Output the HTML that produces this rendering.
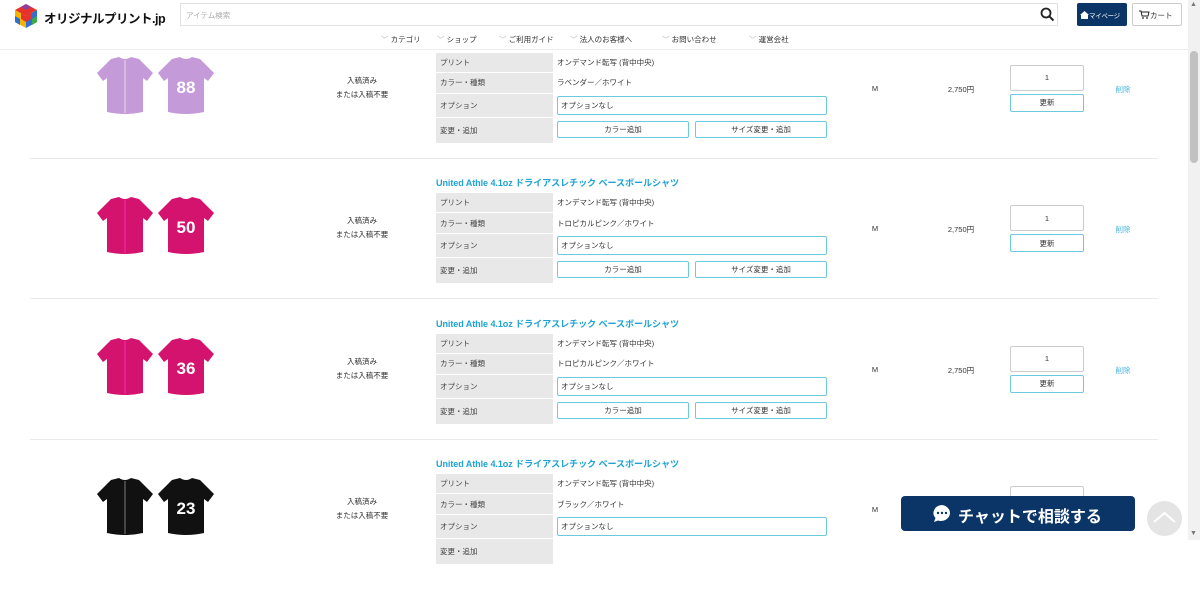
<!DOCTYPE html>
<html><head><meta charset="utf-8"><style>
*{margin:0;padding:0;box-sizing:border-box}
body{width:1200px;height:540px;overflow:hidden;background:#fff;font-family:"Liberation Sans","Noto Sans CJK JP",sans-serif;color:#333;font-size:8px;position:relative}
.a{position:absolute}
.row{position:absolute;left:0;width:1188px;height:140px}
.title{position:absolute;left:436px;top:1px;font-size:9.1px;font-weight:bold;color:#1fa3d4;white-space:nowrap;letter-spacing:-0.1px}
.lab{position:absolute;left:436px;width:117px;background:#e8e8e8;padding-left:4px;display:flex;align-items:center;font-size:7.5px;color:#444}
.val{position:absolute;left:557px;display:flex;align-items:center;font-size:7.5px;color:#333;white-space:nowrap}
.box{position:absolute;border:1px solid #6cc9e0;border-radius:2px;background:#fff;font-size:7.5px;display:flex;align-items:center}
.c{justify-content:center}
.sep{position:absolute;left:30px;width:1128px;height:1px;background:#eaeaea;top:124px}
.mid{position:absolute;font-size:7.5px;text-align:center;white-space:nowrap}
</style></head><body>
<svg width="0" height="0" style="position:absolute"><defs>
<path id="sh" d="M14,3 L22,1 Q28,5 34,1 L42,3 L56,17 L50,25 L46,22 L46,56 Q28,60 10,56 L10,22 L6,25 L0,17 Z"/>
</defs></svg>

<div class="row" style="top:33.5px">
<div class="title">United Athle 4.1oz ドライアスレチック ベースボールシャツ</div>
<svg class="a" style="left:97px;top:22px" width="56" height="61"><use href="#sh" fill="#c49ad8"/><line x1="28" y1="4" x2="28" y2="57" stroke="#eee" stroke-width="0.8"/></svg>
<svg class="a" style="left:158px;top:22px" width="56" height="61"><use href="#sh" fill="#c49ad8"/><text x="28" y="37" font-size="17" font-weight="bold" fill="#fff" text-anchor="middle" font-family="Liberation Sans">88</text></svg>
<div class="mid" style="left:320px;width:84px;top:40px;line-height:14px">入稿済み<br>または入稿不要</div>
<div class="lab" style="top:19px;height:19px">プリント</div><div class="val" style="top:19px;height:19px">オンデマンド転写 (背中中央)</div>
<div class="lab" style="top:39px;height:20px">カラー・種類</div><div class="val" style="top:39px;height:20px">ラベンダー／ホワイト</div>
<div class="lab" style="top:60px;height:23px">オプション</div><div class="box" style="left:557px;top:62px;width:270px;height:19px;padding-left:3px">オプションなし</div>
<div class="lab" style="top:84px;height:25px">変更・追加</div><div class="box c" style="left:557px;top:87px;width:132px;height:17px">カラー追加</div><div class="box c" style="left:695px;top:87px;width:132px;height:17px">サイズ変更・追加</div>
<div class="mid" style="left:865px;width:20px;top:50px">M</div>
<div class="mid" style="left:935px;width:52px;top:50px">2,750円</div>
<div class="box c" style="left:1010px;top:31px;width:74px;height:26px;border-color:#ccc">1</div>
<div class="box c" style="left:1010px;top:60px;width:74px;height:18px">更新</div>
<div class="mid" style="left:1113px;width:20px;top:50px;color:#4ab6dc">削除</div>
<div class="sep"></div>
</div>

<div class="row" style="top:174px">
<div class="title">United Athle 4.1oz ドライアスレチック ベースボールシャツ</div>
<svg class="a" style="left:97px;top:22px" width="56" height="61"><use href="#sh" fill="#d4136f"/><line x1="28" y1="4" x2="28" y2="57" stroke="#f3b" stroke-width="0.8"/></svg>
<svg class="a" style="left:158px;top:22px" width="56" height="61"><use href="#sh" fill="#d4136f"/><text x="28" y="37" font-size="17" font-weight="bold" fill="#fff" text-anchor="middle" font-family="Liberation Sans">50</text></svg>
<div class="mid" style="left:320px;width:84px;top:40px;line-height:14px">入稿済み<br>または入稿不要</div>
<div class="lab" style="top:19px;height:19px">プリント</div><div class="val" style="top:19px;height:19px">オンデマンド転写 (背中中央)</div>
<div class="lab" style="top:39px;height:20px">カラー・種類</div><div class="val" style="top:39px;height:20px">トロピカルピンク／ホワイト</div>
<div class="lab" style="top:60px;height:23px">オプション</div><div class="box" style="left:557px;top:62px;width:270px;height:19px;padding-left:3px">オプションなし</div>
<div class="lab" style="top:84px;height:25px">変更・追加</div><div class="box c" style="left:557px;top:87px;width:132px;height:17px">カラー追加</div><div class="box c" style="left:695px;top:87px;width:132px;height:17px">サイズ変更・追加</div>
<div class="mid" style="left:865px;width:20px;top:50px">M</div>
<div class="mid" style="left:935px;width:52px;top:50px">2,750円</div>
<div class="box c" style="left:1010px;top:31px;width:74px;height:26px;border-color:#ccc">1</div>
<div class="box c" style="left:1010px;top:60px;width:74px;height:18px">更新</div>
<div class="mid" style="left:1113px;width:20px;top:50px;color:#4ab6dc">削除</div>
<div class="sep"></div>
</div>

<div class="row" style="top:314.5px">
<div class="title">United Athle 4.1oz ドライアスレチック ベースボールシャツ</div>
<svg class="a" style="left:97px;top:22px" width="56" height="61"><use href="#sh" fill="#d4136f"/><line x1="28" y1="4" x2="28" y2="57" stroke="#f3b" stroke-width="0.8"/></svg>
<svg class="a" style="left:158px;top:22px" width="56" height="61"><use href="#sh" fill="#d4136f"/><text x="28" y="37" font-size="17" font-weight="bold" fill="#fff" text-anchor="middle" font-family="Liberation Sans">36</text></svg>
<div class="mid" style="left:320px;width:84px;top:40px;line-height:14px">入稿済み<br>または入稿不要</div>
<div class="lab" style="top:19px;height:19px">プリント</div><div class="val" style="top:19px;height:19px">オンデマンド転写 (背中中央)</div>
<div class="lab" style="top:39px;height:20px">カラー・種類</div><div class="val" style="top:39px;height:20px">トロピカルピンク／ホワイト</div>
<div class="lab" style="top:60px;height:23px">オプション</div><div class="box" style="left:557px;top:62px;width:270px;height:19px;padding-left:3px">オプションなし</div>
<div class="lab" style="top:84px;height:25px">変更・追加</div><div class="box c" style="left:557px;top:87px;width:132px;height:17px">カラー追加</div><div class="box c" style="left:695px;top:87px;width:132px;height:17px">サイズ変更・追加</div>
<div class="mid" style="left:865px;width:20px;top:50px">M</div>
<div class="mid" style="left:935px;width:52px;top:50px">2,750円</div>
<div class="box c" style="left:1010px;top:31px;width:74px;height:26px;border-color:#ccc">1</div>
<div class="box c" style="left:1010px;top:60px;width:74px;height:18px">更新</div>
<div class="mid" style="left:1113px;width:20px;top:50px;color:#4ab6dc">削除</div>
<div class="sep"></div>
</div>

<div class="row" style="top:455px">
<div class="title">United Athle 4.1oz ドライアスレチック ベースボールシャツ</div>
<svg class="a" style="left:97px;top:22px" width="56" height="61"><use href="#sh" fill="#111"/><line x1="28" y1="4" x2="28" y2="57" stroke="#999" stroke-width="0.8"/></svg>
<svg class="a" style="left:158px;top:22px" width="56" height="61"><use href="#sh" fill="#111"/><text x="28" y="37" font-size="17" font-weight="bold" fill="#fff" text-anchor="middle" font-family="Liberation Sans">23</text></svg>
<div class="mid" style="left:320px;width:84px;top:40px;line-height:14px">入稿済み<br>または入稿不要</div>
<div class="lab" style="top:19px;height:19px">プリント</div><div class="val" style="top:19px;height:19px">オンデマンド転写 (背中中央)</div>
<div class="lab" style="top:39px;height:20px">カラー・種類</div><div class="val" style="top:39px;height:20px">ブラック／ホワイト</div>
<div class="lab" style="top:60px;height:23px">オプション</div><div class="box" style="left:557px;top:62px;width:270px;height:19px;padding-left:3px">オプションなし</div>
<div class="lab" style="top:84px;height:25px">変更・追加</div>
<div class="mid" style="left:865px;width:20px;top:50px">M</div>
<div class="box c" style="left:1010px;top:31px;width:74px;height:26px;border-color:#ccc">1</div>
</div>

<div class="a" style="left:0;top:0;width:1188px;height:50px;background:#fff;border-bottom:1px solid #eee"></div>
<svg class="a" style="left:13px;top:3px" width="26" height="26" viewBox="0 0 26 26">
<polygon points="13,1 24,7 13,13 2,7" fill="#e6332a"/><polygon points="2,7 13,13 13,25 2,19" fill="#f5b400"/><polygon points="24,7 13,13 13,25 24,19" fill="#2e6fd0"/>
<polygon points="13,1 18,4 13,7 8,4" fill="#8c3fa0"/><polygon points="2,13 7,16 7,22 2,19" fill="#2e6fd0"/><polygon points="24,13 19,16 19,22 24,19" fill="#3bab4a"/>
<polygon points="8,10 13,13 13,19 8,16" fill="#e6332a"/><polygon points="18,10 13,13 13,19 18,16" fill="#e6332a"/></svg>
<div class="a" style="left:44px;top:8px;font-size:12.5px;font-weight:bold;color:#111;letter-spacing:-0.5px">オリジナルプリント.jp</div>
<div class="a" style="left:180px;top:3px;width:878px;height:23px;border:1px solid #e2e2e2;background:#fff;font-size:7.5px;color:#aaa;padding:6px 0 0 5px">アイテム検索</div>
<svg class="a" style="left:1040px;top:7px" width="15" height="15" viewBox="0 0 15 15"><circle cx="6" cy="6" r="4.5" fill="none" stroke="#222" stroke-width="1.8"/><line x1="9.3" y1="9.3" x2="13.5" y2="13.5" stroke="#222" stroke-width="2"/></svg>
<div class="a" style="left:1077px;top:3px;width:50px;height:23px;background:#0b3566;border-radius:2px;color:#fff;font-size:6.5px;padding:7px 0 0 3px;white-space:nowrap;letter-spacing:-0.3px"><svg width="9" height="8" style="vertical-align:-1px" viewBox="0 0 9 8"><path d="M4.5,0 L9,4 L8,4 L8,8 L1,8 L1,4 L0,4Z" fill="#fff"/></svg>マイページ</div>
<div class="a" style="left:1132px;top:3px;width:50px;height:23px;border:1px solid #ccc;border-radius:2px;font-size:7.5px;padding:6px 0 0 6px;white-space:nowrap"><svg width="11" height="9" style="vertical-align:-1px" viewBox="0 0 11 9"><path d="M0,1 L2,1 L3,6 L9,6 L10,2 L2.5,2" fill="none" stroke="#222" stroke-width="1"/><circle cx="4" cy="8" r="0.9" fill="#222"/><circle cx="8" cy="8" r="0.9" fill="#222"/></svg>カート</div>
<div class="a" style="top:34px;left:0;width:1188px;font-size:7.5px;color:#333;white-space:nowrap">
<span class="a" style="left:381px"><span style="color:#bbb">﹀</span> カテゴリ</span>
<span class="a" style="left:437px"><span style="color:#bbb">﹀</span> ショップ</span>
<span class="a" style="left:499px"><span style="color:#bbb">﹀</span> ご利用ガイド</span>
<span class="a" style="left:570px"><span style="color:#bbb">﹀</span> 法人のお客様へ</span>
<span class="a" style="left:662px"><span style="color:#bbb">﹀</span> お問い合わせ</span>
<span class="a" style="left:749px"><span style="color:#bbb">﹀</span> 運営会社</span>
</div>

<div class="a" style="left:1188px;top:0;width:12px;height:540px;background:#f1f1f1"></div>
<div class="a" style="left:1190px;top:51px;width:8px;height:112px;background:#c1c1c1;border-radius:4px"></div>
<div class="a" style="left:1190px;top:1px;font-size:7px;color:#777">▲</div>
<div class="a" style="left:1190px;top:530px;font-size:7px;color:#777">▼</div>

<div class="a" style="left:901px;top:496px;width:234px;height:35px;background:#0b3566;border-radius:4px;color:#fff;font-size:16px;font-weight:bold;padding:7px 0 0 57px;white-space:nowrap">チャットで相談する</div>
<svg class="a" style="left:932px;top:504px" width="20" height="19" viewBox="0 0 20 19"><path d="M10,1 A9,8 0 1 1 6,16.5 L2,18 L3.5,14 A9,8 0 0 1 10,1Z" fill="#fff"/><circle cx="6" cy="9" r="1.2" fill="#0b3566"/><circle cx="10" cy="9" r="1.2" fill="#0b3566"/><circle cx="14" cy="9" r="1.2" fill="#0b3566"/></svg>
<div class="a" style="left:1147px;top:501px;width:35px;height:35px;border-radius:50%;background:#e4e4e4"></div>
<svg class="a" style="left:1152px;top:510px" width="25" height="14"><polyline points="2,12 12.5,3 23,12" fill="none" stroke="#fff" stroke-width="2"/></svg>
</body></html>
